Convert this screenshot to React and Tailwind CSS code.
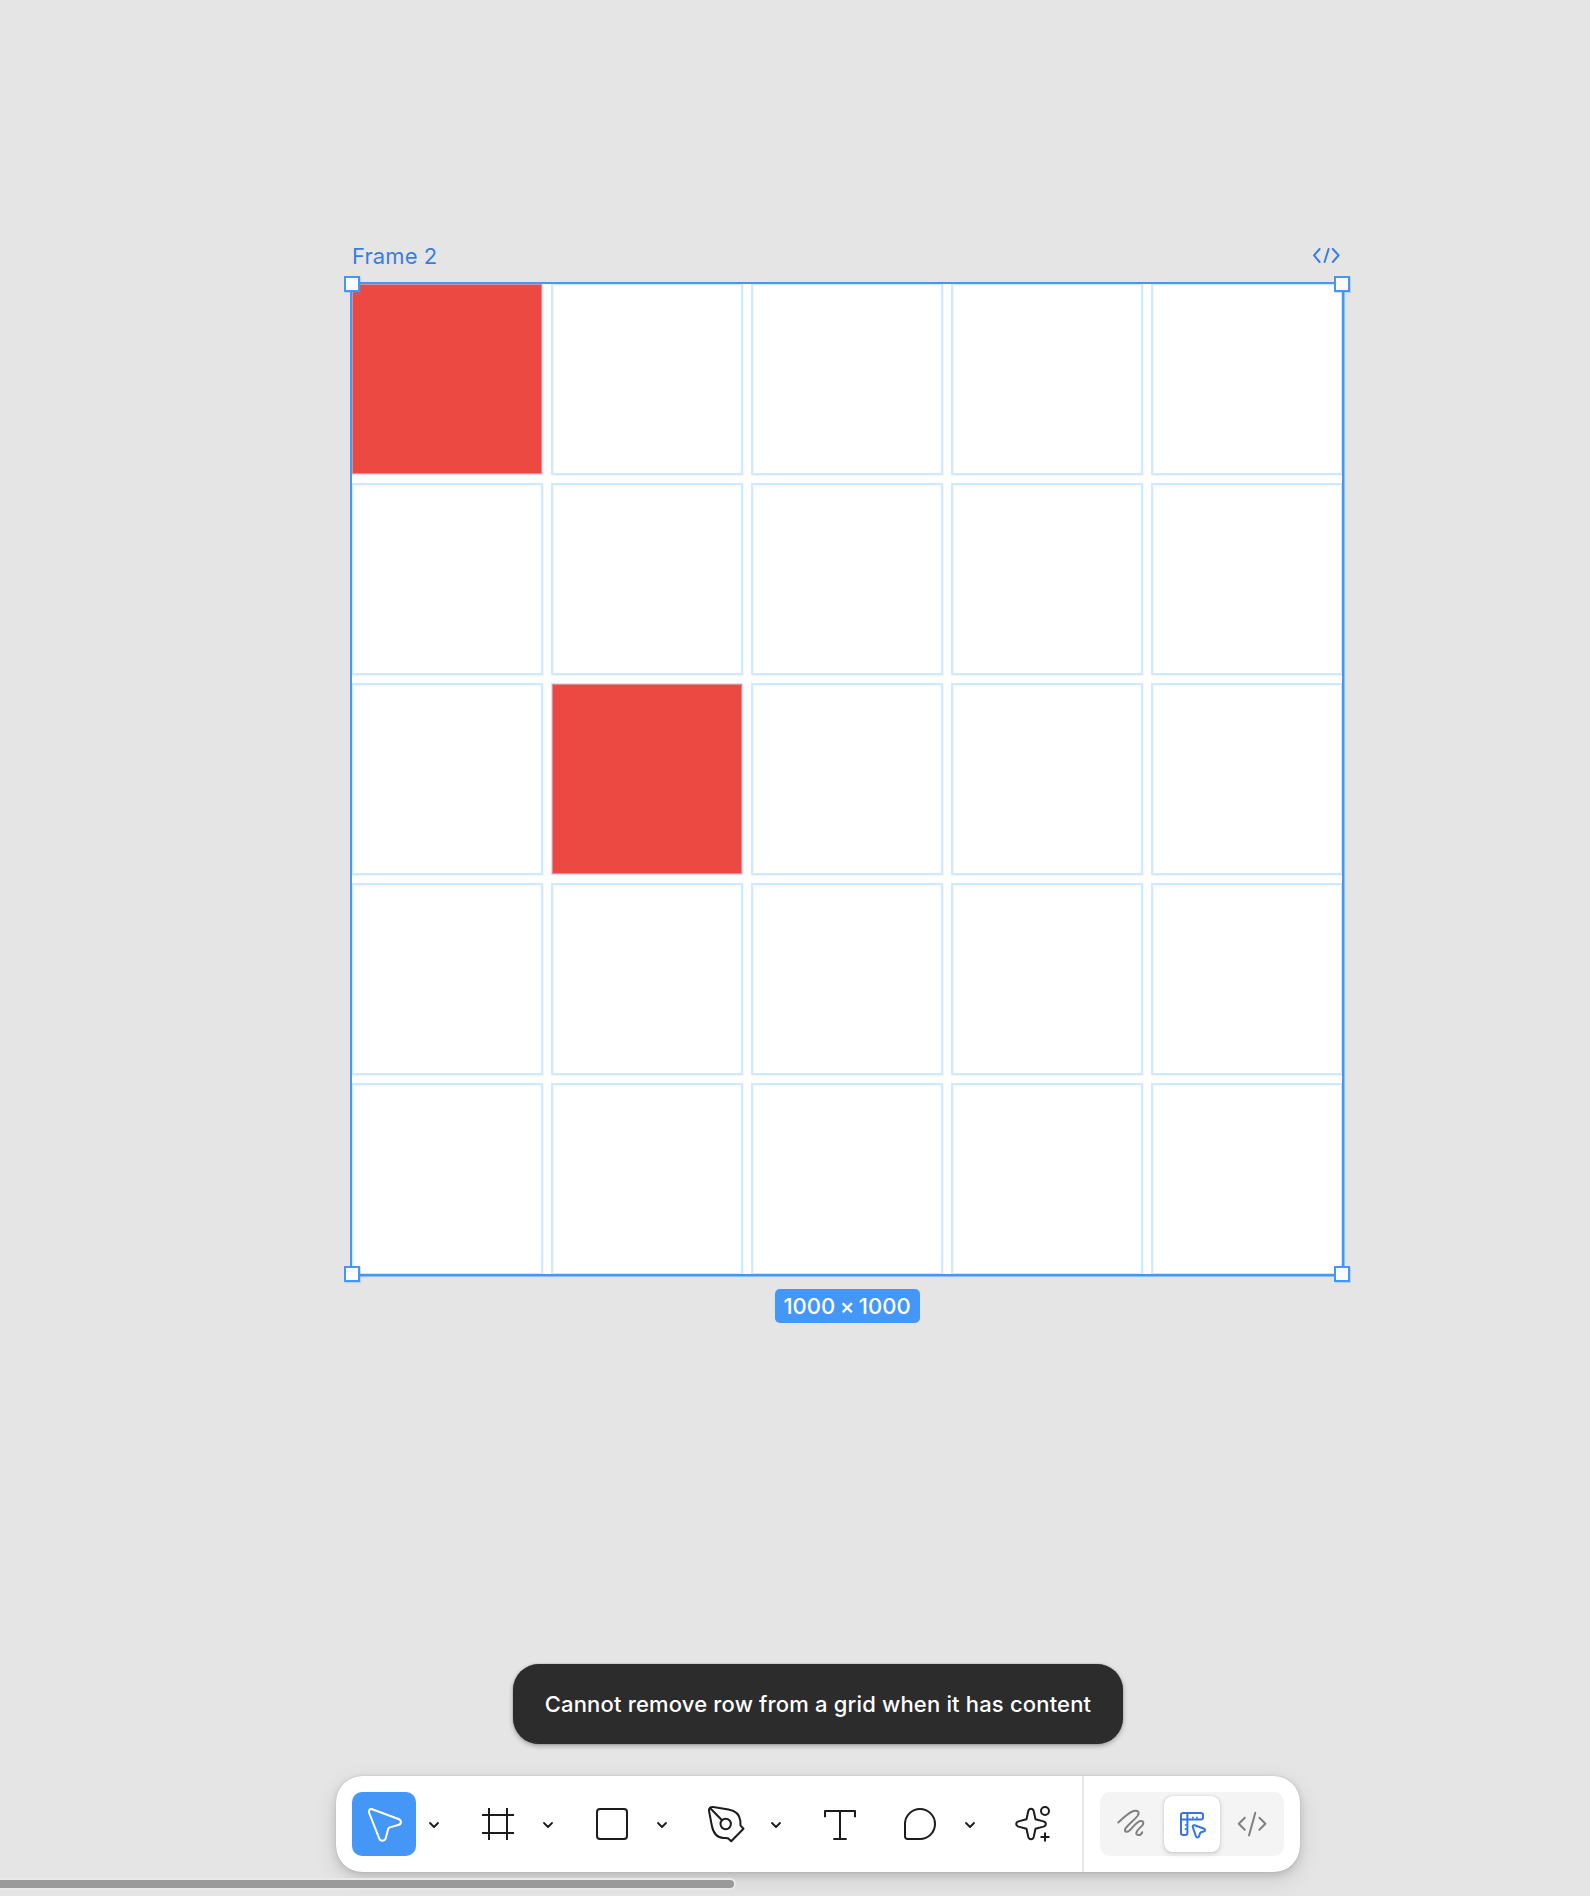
import React from "react";

const CELLS = Array.from({ length: 25 }, (_, i) => i);
const FILLED = [0, 11];

function Svg({ w = 64, h = 64, className = "", sw = 2, children }) {
  return (
    <svg
      width={w}
      height={h}
      viewBox={`0 0 ${w} ${h}`}
      fill="none"
      stroke="currentColor"
      strokeWidth={sw}
      strokeLinecap="round"
      strokeLinejoin="round"
      className={`block shrink-0 ${className}`}
    >
      {children}
    </svg>
  );
}

function Chevron() {
  return (
    <Svg w={36} h={64} sw={1.8}>
      <path d="M14 31l4 4 4-4" />
    </Svg>
  );
}

function Cell({ filled }) {
  return filled ? (
    <div className="border border-[#cfe6fd] shadow-[1px_1px_0_#eff7ff]">
      <div className="h-full border border-[#dd8d96] bg-[#eb4942]" />
    </div>
  ) : (
    <div className="border-2 border-[#d1e9ff] bg-white shadow-[1px_1px_0_#eff7ff,inset_1px_1px_0_#eff7ff]" />
  );
}

function Handle({ className }) {
  return (
    <div
      className={`absolute size-4 border-2 border-[#4597f7] bg-[#fcfcfc] shadow-[1px_1px_0_rgba(69,151,247,0.3)] ${className}`}
    />
  );
}

function GridFrame() {
  return (
    <div className="ml-[351px] w-[992px]">
      <div className="flex h-8 items-center justify-between pr-[2px] text-[#3b7ddd]">
        <span className="pl-px text-[22px] leading-8 tracking-[0.1px]">Frame 2</span>
        <Svg w={30} h={20} sw={2} className="-mt-[2px]">
          <path d="M8.6 4L3 10.3 8.6 17M17.6 4l-4 13M21.8 4l5.8 6.3-5.8 6.7" />
        </Svg>
      </div>
      <div className="relative mt-[11px] h-[992px]">
        <div className="grid h-full grid-cols-5 grid-rows-5 gap-2 bg-white">
          {CELLS.map((i) => (
            <Cell key={i} filled={FILLED.includes(i)} />
          ))}
        </div>
        <div className="absolute -inset-px border-2 border-[#4597f7] shadow-[1px_1px_0_#8fbff2]" />
        <Handle className="-left-[7px] -top-[7px]" />
        <Handle className="-right-[7px] -top-[7px]" />
        <Handle className="-bottom-[7px] -left-[7px]" />
        <Handle className="-bottom-[7px] -right-[7px]" />
      </div>
      <div className="mt-[14px] flex justify-center">
        <div className="flex h-[34px] w-[145px] items-center justify-center gap-[4.500px] rounded-[5px] bg-[#4597f7] text-[22px] font-medium leading-none text-white">
          <span>1000</span>
          <span>×</span>
          <span>1000</span>
        </div>
      </div>
    </div>
  );
}

function Toolbar() {
  return (
    <div className="flex h-24 w-[964px] rounded-[26px] bg-white text-[#1b1b1b] shadow-[0_0_1px_rgba(0,0,0,0.3),0_3px_8px_rgba(0,0,0,0.14),0_8px_24px_rgba(0,0,0,0.10)]">
      <div className="flex w-[746px] items-center pl-4">
        <div className="rounded-[10px] bg-[#4597f7] text-white">
          <Svg>
            <path d="M20.2 17.2L46.5 27c3.4 1.3 3.2 5-.3 6l-8.4 2.4q-1.2.4-1.6 1.6L33.8 46c-1 3.4-5.4 3.6-6.6.4L17.2 21c-1-2.5.8-4.6 3-3.8z" />
          </Svg>
        </div>
        <Chevron />
        <Svg className="ml-[14px]">
          <path strokeLinecap="butt" d="M23 16v32M41 16v32M16 23h32M16 41h32" />
        </Svg>
        <Chevron />
        <Svg className="ml-[14px]">
          <rect x="17" y="17" width="30" height="30" rx="3" />
        </Svg>
        <Chevron />
        <Svg className="ml-[14px]">
          <g transform="translate(6 0)">
            <path d="M13.200 15.100c-2.500-.5-4.600 1.200-4.200 3.700L11.800 33.500C13.200 41 17 45.600 23.600 46.100c1.800.1 3.400-.3 4.800.4l2.800 2.700 12.300-12.500-2.700-2.800c-.8-1.400-.2-2.900-.4-4.700-.8-6.500-5.200-10.500-11.900-11.600z" />
            <path d="M10.300 16.300l11.700 12" />
            <circle cx="25.700" cy="32" r="5.200" />
          </g>
        </Svg>
        <Chevron />
        <Svg className="ml-[14px]">
          <path strokeLinecap="butt" d="M17 25.300V19h30v6.300M32 19v28M25.300 47h13.400" />
        </Svg>
        <Svg className="ml-4">
          <path d="M17 32a15 15 0 1 1 15 15H19.500a2.500 2.500 0 0 1-2.500-2.500z" />
        </Svg>
        <Chevron />
        <Svg className="ml-3">
          <path d="M28.300 19c.9-3 4.500-3 5.400 0l1.800 8.300 8 2.100c3.100.9 3.100 4.300 0 5.200l-8 2.100-1.800 8.300c-.9 3-4.500 3-5.400 0l-1.800-8.300-8-2.100c-3.100-.9-3.100-4.300 0-5.200l8-2.100z" />
          <circle cx="45" cy="19" r="4" />
          <path strokeLinecap="butt" d="M45 40.500v9M40.500 45h9" />
        </Svg>
      </div>
      <div className="w-[2px] bg-[#e6e6e6]" />
      <div className="my-4 ml-4 flex h-16 w-[184px] items-center gap-1 rounded-[10px] bg-[#f4f4f4] px-1 text-[#808080]">
        <Svg w={56} h={56}>
          <path d="M14.300 26.500C19 22 25 16.500 29.500 15c4.500-1.300 6.500 1.500 4 5C30 24.500 24 28.500 21.500 32.500c-1.800 3 1 4.500 4 2C29 31.500 32 26 36.300 25c3-.6 4 1.500 2 4.300-2 2.500-5.500 4.700-6 7.700-.4 2.800 4.500 3 5.900-.7" />
        </Svg>
        <div className="rounded-lg bg-white text-[#3277e0] shadow-[0_0_1px_rgba(0,0,0,0.35),0_2px_5px_rgba(0,0,0,0.14)]">
          <Svg w={56} h={56}>
            <path d="M19.200 17h17.600a2.200 2.200 0 0 1 2.200 2.200v2a2.200 2.200 0 0 1-2.200 2.200H23.400v13.400a2.200 2.200 0 0 1-2.200 2.200h-2a2.200 2.200 0 0 1-2.200-2.200V19.200a2.200 2.200 0 0 1 2.200-2.200zM23.400 17v6.400H17" />
            <path strokeLinecap="butt" strokeWidth="1.700" d="M28.800 20.800v2M33 20.800v2M20.800 29h2M20.800 33.200h2" />
            <path d="M30.700 29.300l8.900 3.200c2 .8 1.900 2.500 0 3l-2.500.8c-.6.2-.9.500-1.100 1.100l-.9 2.700c-.6 1.700-2.500 1.800-3.200.1l-3.100-9c-.5-1.400.5-2.400 1.900-1.900z" />
          </Svg>
        </div>
        <Svg w={56} h={56}>
          <path d="M20.800 21.700l-6 6 6 6M31.300 16.800l-6.300 22.600M35.400 21.700l6 6-6 6" />
        </Svg>
      </div>
    </div>
  );
}

export default function App() {
  return (
    <div className="relative flex h-[1896px] w-[1590px] flex-col overflow-hidden bg-[#e5e5e5] pt-[240px] font-['Inter',sans-serif]">
      <GridFrame />
      <div className="ml-[336px] mt-[341px] flex w-[964px] flex-col items-center gap-8">
        <div className="flex h-20 w-[610px] items-center justify-center rounded-[26px] bg-[#2c2c2c] text-[22px] font-medium tracking-[0.17px] text-white shadow-[0_0_1px_rgba(0,0,0,0.5),0_2px_5px_rgba(0,0,0,0.3)]">
          Cannot remove row from a grid when it has content
        </div>
        <Toolbar />
      </div>
      <div className="mt-2 h-2 w-[734px] shrink-0 rounded-r-full bg-[#9a9a9a] shadow-[0_0_0_2px_#e9e9e9]" />
    </div>
  );
}
